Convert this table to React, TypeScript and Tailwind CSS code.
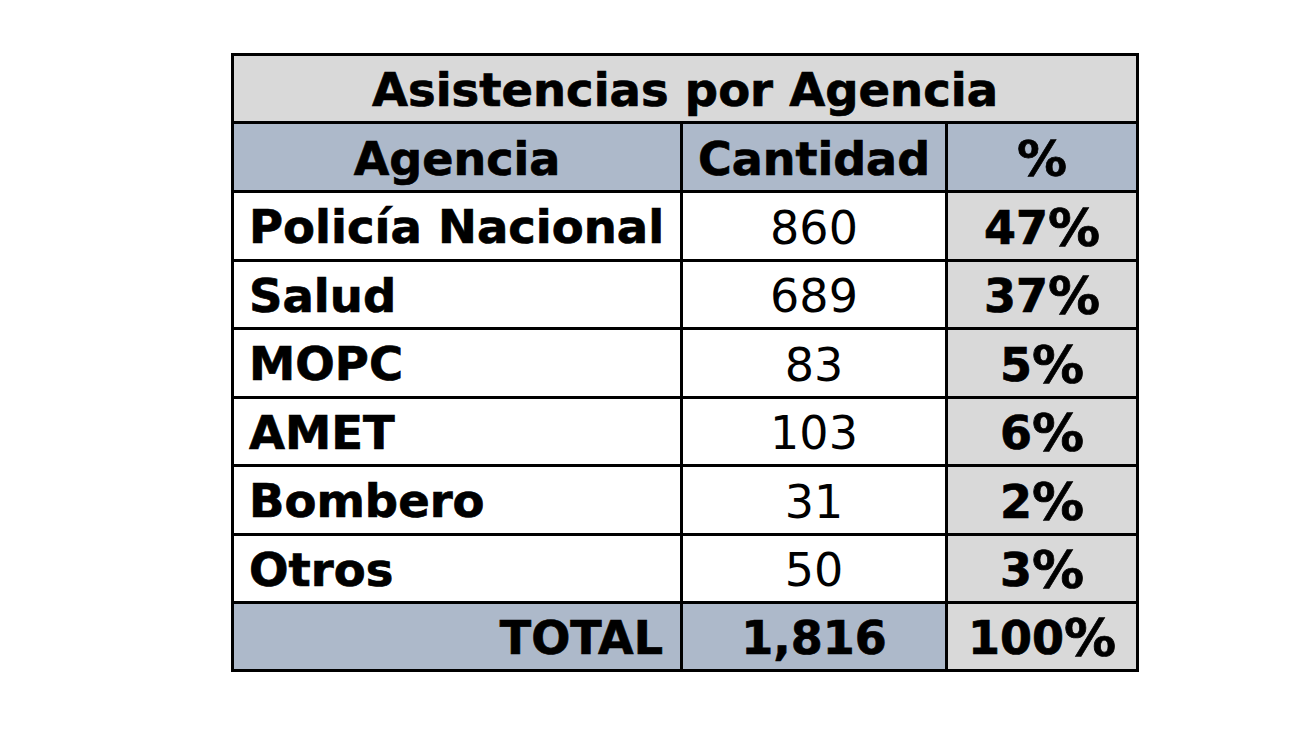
import React from 'react';

const rows = [
  { name: 'Policía Nacional', qty: '860', pct: '47%', h: 'h-[66px]' },
  { name: 'Salud', qty: '689', pct: '37%', h: 'h-[65px]' },
  { name: 'MOPC', qty: '83', pct: '5%', h: 'h-[66px]' },
  { name: 'AMET', qty: '103', pct: '6%', h: 'h-[65px]' },
  { name: 'Bombero', qty: '31', pct: '2%', h: 'h-[66px]' },
  { name: 'Otros', qty: '50', pct: '3%', h: 'h-[65px]' },
];

const bold = 'font-bold [-webkit-text-stroke:0.7px_black]';

export default function App() {
  return (
    <div className="min-h-[731px] w-[1300px] bg-white pl-[231px] pt-[53px] font-['DejaVu_Sans',sans-serif] text-black">
      <div className="grid w-[908px] grid-cols-[446px_262px_188px] gap-[3px] bg-black p-[3px] text-[46px] leading-none">
        <div className={`col-span-3 flex h-[65px] items-center justify-center bg-[#d9d9d9] pt-[3px] text-[46.5px] ${bold}`}>
          Asistencias por Agencia
        </div>

        <div className={`flex h-[66px] items-center justify-center bg-[#adb9ca] pt-[3px] ${bold}`}>Agencia</div>
        <div className={`flex h-[66px] items-center justify-center bg-[#adb9ca] pt-[3px] ${bold}`}>Cantidad</div>
        <div className={`flex h-[66px] items-center justify-center bg-[#adb9ca] pt-[3px] text-[50px] ${bold}`}>%</div>

        {rows.map((r) => (
          <React.Fragment key={r.name}>
            <div className={`flex ${r.h} items-center bg-white pl-[15px] pt-[3px] text-[46.5px] ${bold}`}>{r.name}</div>
            <div className={`flex ${r.h} items-center justify-center bg-white pt-[3px]`}>{r.qty}</div>
            <div className={`flex ${r.h} items-center justify-center bg-[#d9d9d9] pt-[3px] ${bold}`}>
              {r.pct.slice(0, -1)}
              <span className="text-[52px]">%</span>
            </div>
          </React.Fragment>
        ))}

        <div className={`flex h-[65px] items-center justify-end bg-[#adb9ca] pr-[17px] pt-[3px] ${bold}`}>TOTAL</div>
        <div className={`flex h-[65px] items-center justify-center bg-[#adb9ca] pt-[3px] ${bold}`}>1,816</div>
        <div className={`flex h-[65px] items-center justify-center bg-[#d9d9d9] pt-[3px] ${bold}`}>
          100<span className="text-[52px]">%</span>
        </div>
      </div>
    </div>
  );
}
